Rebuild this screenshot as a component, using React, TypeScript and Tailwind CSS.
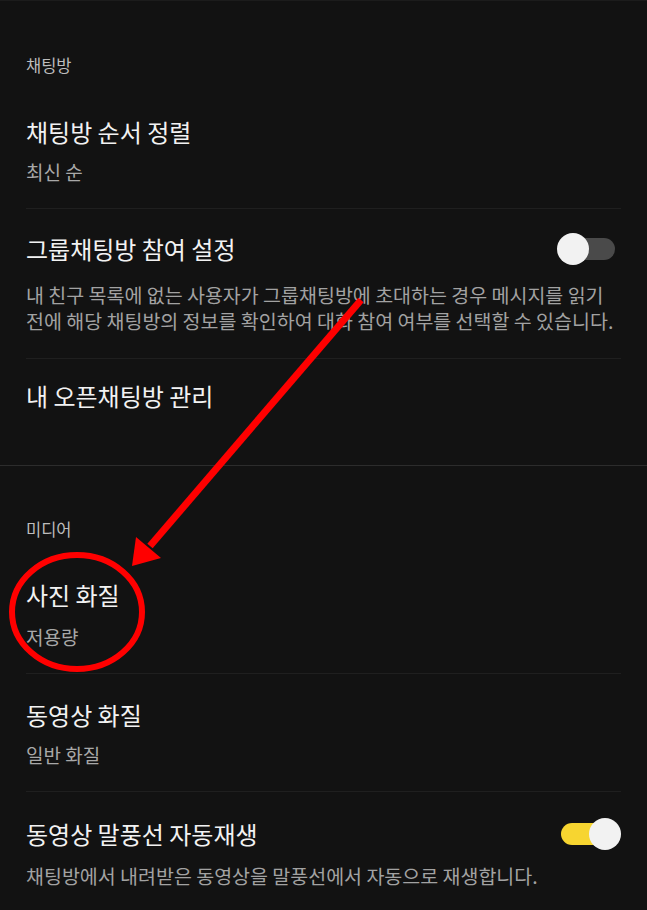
import type { ReactNode } from "react";

// --- settings rows ---
function Toggle({ on }: { on: boolean }) {
  return (
    <div className="relative w-[64px] h-[32px] shrink-0">
      <div
        className={`absolute left-[4px] right-[6px] top-[5px] h-[22px] rounded-full ${
          on ? "bg-[#f7d530]" : "bg-[#4a4a4a]"
        }`}
      />
      <div
        className={`absolute top-0 w-[32px] h-[32px] rounded-full bg-[#f2f2f2] ${
          on ? "right-0" : "left-0"
        }`}
      />
    </div>
  );
}

function SectionLabel({ children, top }: { children: ReactNode; top: string }) {
  return (
    <div className={`${top} text-[16.5px] leading-[20px] text-[#bdbdbd]`}>{children}</div>
  );
}

function Row({
  title,
  sub,
  desc,
  pt = "pt-[24px]",
  gap = "mt-[13px]",
  toggle,
  last,
}: {
  title: string;
  sub?: string;
  desc?: ReactNode;
  pt?: string;
  gap?: string;
  toggle?: boolean;
  last?: boolean;
}) {
  return (
    <div className={`${pt} pb-[24px] ${last ? "" : "border-b border-[#1f1f1f]"}`}>
      <div className="flex items-center justify-between">
        <div className="text-[24px] leading-[30px] text-[#f2f2f2]">{title}</div>
        {toggle !== undefined && <Toggle on={toggle} />}
      </div>
      {sub && <div className={`${gap} text-[19px] leading-[24px] text-[#a8a8a8]`}>{sub}</div>}
      {desc && (
        <div className={`${gap} text-[19.5px] leading-[26px] text-[#a2a2a2] whitespace-nowrap`}>
          {desc}
        </div>
      )}
    </div>
  );
}

// --- red annotation drawn on top of the screenshot ---
function Annotation() {
  return (
    <svg className="absolute inset-0 pointer-events-none" width="647" height="910" viewBox="0 0 647 910">
      <line x1="361" y1="299" x2="150" y2="545" stroke="#ff0000" strokeWidth="7" strokeLinecap="butt" />
      <polygon points="132,565 136,536 161,557" fill="#ff0000" />
      <ellipse cx="77" cy="611" rx="65" ry="57" fill="none" stroke="#ff0000" strokeWidth="6" />
    </svg>
  );
}

export default function App() {
  return (
    <div
      className="relative w-[647px] h-[910px] overflow-hidden bg-[#121212] border-t border-[#1c1c1c]"
      style={{ fontFamily: '"Noto Sans CJK KR", "Noto Sans", sans-serif' }}
    >
      <div className="px-[26px]">
        <SectionLabel top="pt-[54px]">채팅방</SectionLabel>
        <div className="mt-[18px]">
          <Row title="채팅방 순서 정렬" sub="최신 순" />
          <Row
            title="그룹채팅방 참여 설정"
            toggle={false}
            gap="mt-[17px]"
            desc={
              <>
                <div>내 친구 목록에 없는 사용자가 그룹채팅방에 초대하는 경우 메시지를 읽기</div>
                <div>전에 해당 채팅방의 정보를 확인하여 대화 참여 여부를 선택할 수 있습니다.</div>
              </>
            }
          />
          <div className="pt-[22px] pb-[54px]">
            <div className="text-[24px] leading-[30px] text-[#f2f2f2]">내 오픈채팅방 관리</div>
          </div>
        </div>
      </div>

      <div className="border-t border-[#2c2c2c]" />

      <div className="px-[26px]">
        <SectionLabel top="pt-[53px]">미디어</SectionLabel>
        <div className="mt-[17px]">
          <Row title="사진 화질" sub="저용량" gap="mt-[15px]" />
          <Row title="동영상 화질" sub="일반 화질" pt="pt-[26px]" />
          <Row
            title="동영상 말풍선 자동재생"
            toggle={true}
            last
            pt="pt-[26px]"
            desc="채팅방에서 내려받은 동영상을 말풍선에서 자동으로 재생합니다."
          />
        </div>
      </div>

      <Annotation />
    </div>
  );
}
